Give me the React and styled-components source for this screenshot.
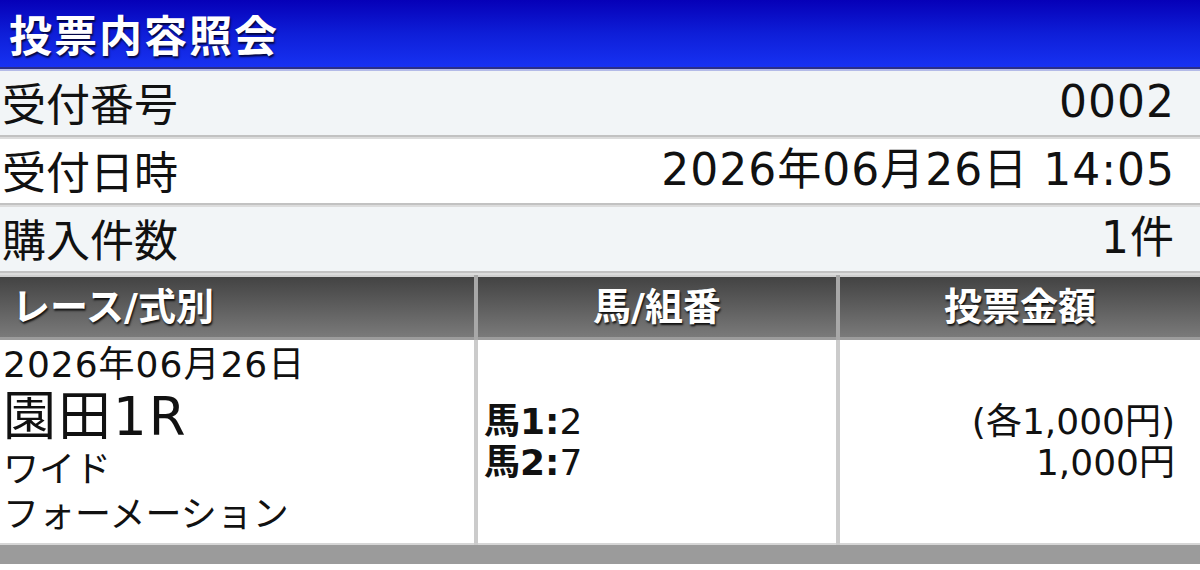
import React from 'react';
import styled, { createGlobalStyle } from 'styled-components';

const GlobalStyle = createGlobalStyle`
  *, *::before, *::after {
    box-sizing: border-box;
  }
  html, body {
    margin: 0;
    padding: 0;
    background: #ffffff;
  }
  body {
    font-family: "DejaVu Sans", "Noto Sans CJK JP", sans-serif;
    color: #111;
  }
`;

const Page = styled.div`
  width: 1200px;
  height: 570px;
  overflow: hidden;
  display: flex;
  flex-direction: column;
  background: #fff;
`;

const Header = styled.div`
  height: 69px;
  flex-shrink: 0;
  display: flex;
  align-items: center;
  padding-left: 9px;
  background: linear-gradient(to bottom, #0600b8 0%, #0e1ed8 50%, #1732f2 100%);
  border-bottom: 2px solid #2a2f88;
  box-shadow: 0 2px 0 #b4bbe8;
  margin-bottom: 2px;
`;

const Title = styled.h1`
  margin: 0;
  color: #fff;
  font-family: "Noto Sans CJK JP", sans-serif;
  font-size: 43px;
  font-weight: 700;
  letter-spacing: 2px;
  line-height: 1;
  text-shadow: 1px 2px 2px rgba(0, 0, 30, 0.85);
`;

const InfoRow = styled.div`
  height: 66px;
  flex-shrink: 0;
  display: flex;
  align-items: center;
  justify-content: space-between;
  padding: 0 25px 2px 2px;
  background: ${({ alt }) => (alt ? '#f2f5f7' : '#ffffff')};
  border-bottom: 2px solid #c2c2c2;
  box-shadow: 0 2px 0 #dcdcdc;
  margin-bottom: 2px;
  font-size: 44px;
  line-height: 1;
`;

const Label = styled.span`
  font-family: "Noto Sans CJK JP", sans-serif;
  font-weight: 400;
`;

const Value = styled.span`
  letter-spacing: 1px;
`;

const Grid = styled.div`
  display: grid;
  grid-template-columns: 474px 4px 358px 4px 1fr;
  flex-shrink: 0;
`;

const HeadCell = styled.div`
  height: 65px;
  display: flex;
  align-items: center;
  justify-content: ${({ left }) => (left ? 'flex-start' : 'center')};
  padding-left: ${({ left }) => (left ? '12px' : '0')};
  background: linear-gradient(to bottom, #434343 0%, #5e5e5e 50%, #7a7a7a 100%);
  border-top: 2px solid #cfcfcf;
  border-bottom: 3px solid #9c9c9c;
  color: #fff;
  font-size: 38px;
  font-weight: 700;
  line-height: 1;
  text-shadow: 1px 2px 2px rgba(0, 0, 0, 0.85);
`;

const Divider = styled.div`
  background: ${({ head }) => (head ? '#a8a8a8' : '#cbcbcb')};
`;

const BodyCell = styled.div`
  height: 205px;
  display: flex;
  flex-direction: column;
  justify-content: center;
  align-items: ${({ right }) => (right ? 'flex-end' : 'flex-start')};
  padding: ${({ right }) => (right ? '0 25px 0 0' : '0 0 0 6px')};
  background: #fff;
  border-bottom: 2px solid #d6d6d6;
  font-size: 36px;
  line-height: 41px;
`;

const RaceCell = styled(BodyCell)`
  justify-content: flex-start;
  padding-top: 2px;
  padding-left: 3px;
  line-height: 45px;
`;

const Venue = styled.div`
  font-size: 53px;
  line-height: 60px;
  letter-spacing: 2px;
`;

const Line = styled.div`
  white-space: nowrap;
  letter-spacing: ${({ wide }) => (wide ? '1px' : '0')};
`;

const Bold = styled.b`
  font-weight: 700;
`;

const FooterBar = styled.div`
  height: 19px;
  flex-shrink: 0;
  background: #9b9b9b;
`;

export default function App() {
  const info = [
    { label: '受付番号', value: '0002', alt: true },
    { label: '受付日時', value: '2026年06月26日 14:05', alt: false },
    { label: '購入件数', value: '1件', alt: true },
  ];

  return (
    <>
      <GlobalStyle />
      <Page>
        <Header>
          <Title>投票内容照会</Title>
        </Header>
        {info.map((row) => (
          <InfoRow key={row.label} alt={row.alt}>
            <Label>{row.label}</Label>
            <Value>{row.value}</Value>
          </InfoRow>
        ))}
        <Grid>
          <HeadCell left>レース/式別</HeadCell>
          <Divider head />
          <HeadCell>馬/組番</HeadCell>
          <Divider head />
          <HeadCell>投票金額</HeadCell>

          <RaceCell>
            <Line wide>2026年06月26日</Line>
            <Venue>園田1R</Venue>
            <Line>ワイド</Line>
            <Line>フォーメーション</Line>
          </RaceCell>
          <Divider />
          <BodyCell>
            <Line><Bold>馬1:</Bold>2</Line>
            <Line><Bold>馬2:</Bold>7</Line>
          </BodyCell>
          <Divider />
          <BodyCell right>
            <Line>(各1,000円)</Line>
            <Line>1,000円</Line>
          </BodyCell>
        </Grid>
        <FooterBar />
      </Page>
    </>
  );
}
